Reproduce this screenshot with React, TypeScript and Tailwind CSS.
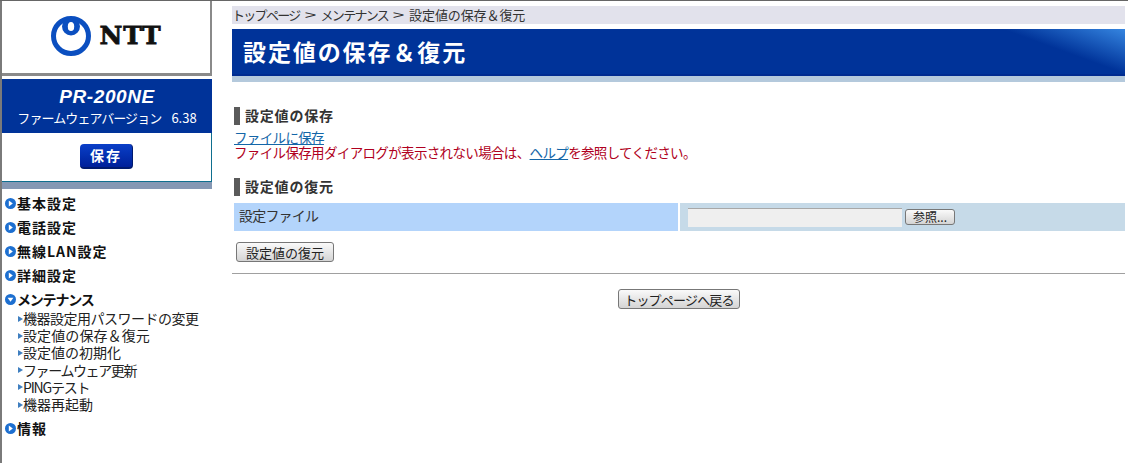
const font = "font-['Noto_Sans_CJK_JP','Liberation_Sans',sans-serif]";

function Bullet({ down }: { down?: boolean }) {
  return (
    <svg width="11" height="11" viewBox="0 0 11 11" className="shrink-0">
      <circle cx="5.5" cy="5.5" r="5.5" fill="#1d6fd0" />
      {down ? <path d="M2.6 3.8H8.4L5.5 7.8Z" fill="#fff" /> : <path d="M3.8 2.6V8.4L7.8 5.5Z" fill="#fff" />}
    </svg>
  );
}

function MainItem({ label, down, track = "tracking-[1px]" }: { label: string; down?: boolean; track?: string }) {
  return (
    <div className="flex items-center h-[24px] pl-[3px]">
      <Bullet down={down} />
      <span className={`text-[14px] font-bold text-[#111] leading-[24px] pl-[1px] ${track}`}>{label}</span>
    </div>
  );
}

function SubItem({ label, track }: { label: string; track: string }) {
  return (
    <div className="flex items-center h-[17.2px] pl-[16px]">
      <svg width="5" height="6" viewBox="0 0 5 6" className="shrink-0">
        <path d="M0 0L5 3L0 6Z" fill="#3f7fc0" />
      </svg>
      <span className={`text-[14px] text-[#222] leading-[17px] whitespace-nowrap ${track}`}>{label}</span>
    </div>
  );
}

function SectionTitle({ label }: { label: string }) {
  return (
    <div className="flex items-center h-[17px] pl-[2px] gap-[5px]">
      <div className="w-[6px] h-[18px] bg-[#5a5a5a]" />
      <span className="text-[14px] font-bold text-[#333] leading-[17px] tracking-[0.8px]">{label}</span>
    </div>
  );
}

function GrayButton({ label, className }: { label: string; className: string }) {
  return (
    <button className={`flex items-center justify-center border border-[#777] rounded-[3px] bg-gradient-to-b from-[#fafafa] to-[#d4d4d4] text-[#222] ${className}`}>
      {label}
    </button>
  );
}

function Crumb() {
  return <span className="inline-block w-[13px] text-center scale-x-[1.6]">&gt;</span>;
}

export default function App() {
  return (
    <div className={`${font} w-[1128px] h-[463px] bg-white flex flex-col overflow-hidden`}>
      <div className="h-[1px] bg-[#666] shrink-0" />
      <div className="flex flex-1 min-h-0">
        <aside className="w-[212px] shrink-0 border-l-2 border-[#7a7a7a] flex flex-col">
          <div className="h-[75px] shrink-0 border-r-2 border-b-[3px] border-[#8a8a8a] flex items-center justify-center gap-[7px] pb-[3px]">
            <svg width="42" height="40" viewBox="0 0 42 40">
              <circle cx="21" cy="20" r="17.5" fill="none" stroke="#0b4fc0" strokeWidth="5" />
              <ellipse cx="21" cy="10.5" rx="9" ry="9" fill="#0b4fc0" />
              <ellipse cx="21" cy="10.5" rx="3.2" ry="4.6" fill="#fff" />
            </svg>
            <span className="font-['DejaVu_Serif',serif] font-black text-[#111] text-[25px] leading-none tracking-[1px] [-webkit-text-stroke:0.8px_#111]">NTT</span>
          </div>
          <div className="h-[3px] shrink-0" />
          <div className="h-[54px] shrink-0 bg-[#003399] flex flex-col items-center text-white">
            <div className="text-[19px] leading-[24px] mt-[6px] font-bold italic font-['Liberation_Sans',sans-serif] tracking-[0.6px]">PR-200NE</div>
            <div className="text-[13px] leading-[17px] whitespace-nowrap flex gap-[10px]">
              <span className="tracking-[-0.9px]">ファームウェアバージョン</span>
              <span>6.38</span>
            </div>
          </div>
          <div className="h-[49px] shrink-0 border-r border-b border-[#0f6f8f] flex items-center justify-center">
            <div className="w-[53px] h-[25px] mt-[-1px] rounded-[4px] bg-gradient-to-b from-[#0b3fc8] to-[#00209a] border-b-2 border-r border-[#001a6e] text-white font-bold text-[14px] tracking-[2px] flex items-center justify-center">
              保存
            </div>
          </div>
          <div className="h-[7px] shrink-0 bg-[#8598b4]" />
          <nav className="pt-[2px]">
            <MainItem label="基本設定" />
            <MainItem label="電話設定" />
            <MainItem label="無線LAN設定" />
            <MainItem label="詳細設定" />
            <MainItem label="メンテナンス" down track="tracking-[-1.2px]" />
            <div className="mb-[3px] mt-[-1px]">
              <SubItem label="機器設定用パスワードの変更" track="tracking-[-0.5px]" />
              <SubItem label="設定値の保存＆復元" track="tracking-[0.1px]" />
              <SubItem label="設定値の初期化" track="tracking-[0px]" />
              <SubItem label="ファームウェア更新" track="tracking-[-1.4px]" />
              <SubItem label="PINGテスト" track="tracking-[-1.2px]" />
              <SubItem label="機器再起動" track="tracking-[0px]" />
            </div>
            <MainItem label="情報" />
          </nav>
        </aside>
        <main className="flex-1 min-w-0 pl-[20px] pr-[3px] flex flex-col">
          <div className="h-[18px] mt-[5px] bg-[#e2e2ec] text-[13px] leading-[18px] text-[#333] whitespace-nowrap flex gap-[4px]">
            <span className="tracking-[-1.7px]">トップページ</span><Crumb /><span className="tracking-[-1.7px]">メンテナンス</span><Crumb /><span className="tracking-[-0.1px]">設定値の保存＆復元</span>
          </div>
          <div className="mt-[5px] h-[53px] shrink-0 flex flex-col">
            <div className="h-[47px] border-b-2 border-[#002b90] bg-[linear-gradient(20deg,#003399_calc(100%-42px),#3585e0_100%)] flex items-center pl-[11px]">
              <span className="text-white font-bold text-[23px] tracking-[1.9px] whitespace-nowrap">設定値の保存＆復元</span>
            </div>
            <div className="h-[6px] bg-[#b4c9dc]" />
          </div>
          <div className="mt-[25px]">
            <SectionTitle label="設定値の保存" />
          </div>
          <div className="mt-[6px] pl-[2px] text-[13.5px] leading-[15px] whitespace-nowrap tracking-[-0.65px]">
            <div className="h-[15px]"><a className="text-[#1466a8] underline">ファイルに保存</a></div>
            <div className="h-[15px] text-[#b00020]">
              ファイル保存用ダイアログが表示されない場合は、<a className="text-[#1466a8] underline">ヘルプ</a>を参照してください。
            </div>
          </div>
          <div className="mt-[18px]">
            <SectionTitle label="設定値の復元" />
          </div>
          <div className="mt-[8px] ml-[2px] flex h-[28px] gap-[2px]">
            <div className="w-[444px] bg-[#b3d4fb] pl-[5px] text-[14px] leading-[25px] text-[#333] tracking-[-0.8px]">設定ファイル</div>
            <div className="flex-1 bg-[#c6dae8] flex items-center pl-[8px]">
              <div className="w-[214px] h-[19px] bg-[#efefef] border-t border-[#a8a8a8]" />
              <GrayButton label="参照..." className="ml-[3px] w-[50px] h-[16px] text-[12px] leading-none" />
            </div>
          </div>
          <div className="mt-[11px] ml-[4px]">
            <GrayButton label="設定値の復元" className="w-[98px] h-[20px] text-[13px] leading-none" />
          </div>
          <div className="mt-[11px] h-[1px] bg-[#a0a0a0]" />
          <div className="mt-[15px] flex justify-center pl-[1px]">
            <GrayButton label="トップページへ戻る" className="w-[122px] h-[20px] text-[13px] leading-none tracking-[-0.8px]" />
          </div>
        </main>
      </div>
    </div>
  );
}
